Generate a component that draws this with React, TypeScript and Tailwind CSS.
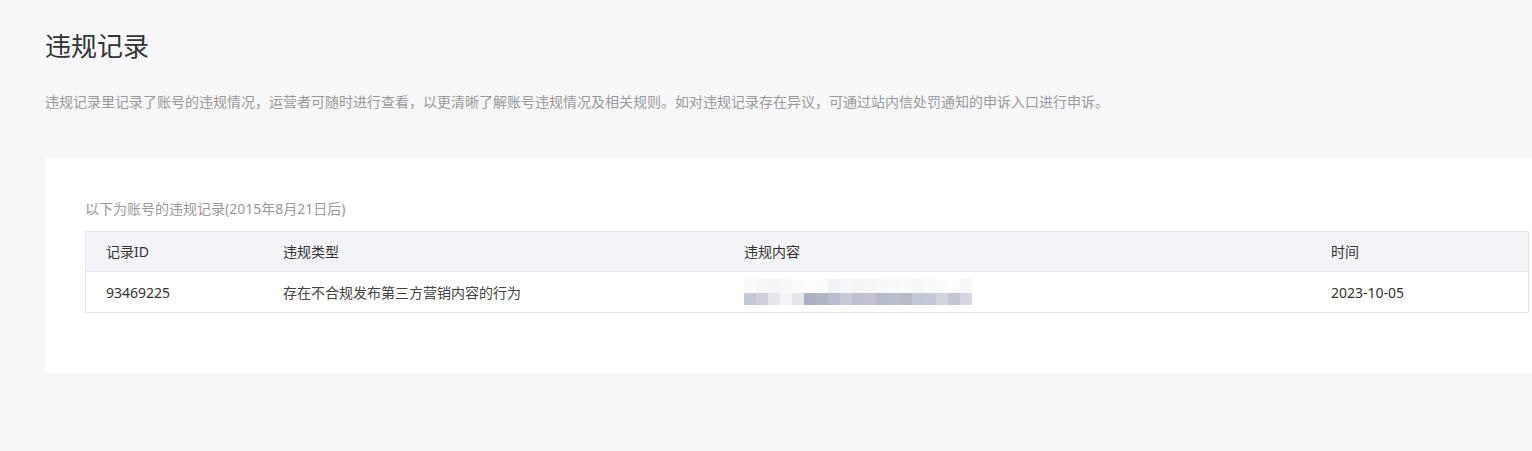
const blurTop = [
  "#fafafb", "#f7f7f9", "#f4f5f7", "#f8f8fa", "#fbfbfc", "#fdfdfd", "#fbfbfc", "#f2f3f6", "#f6f7f8", "#f4f5f7",
  "#f5f6f8", "#f8f8fa", "#f9f9fa", "#fafafb", "#f7f7f9", "#fafafb", "#fcfcfd", "#fdfdfd", "#f6f6f8",
];

const blurBottom = [
  "#c5c8d5", "#cdd0db", "#e6e7ed", "#f3f4f7", "#e5e5ea", "#aab0c4", "#b0b5c8", "#b9bdcf", "#c8cad7", "#bcc0cf",
  "#c2c3cf", "#b7bccd", "#b9bdcd", "#b9bac7", "#c3c8d7", "#c5c9d7", "#d2d4de", "#c4c7d3", "#d5d8e2",
];

function Blurred() {
  return (
    <div className="flex flex-col">
      <div className="flex h-[14px]">
        {blurTop.map((c, i) => (
          <div key={i} className="w-[12px] h-full" style={{ backgroundColor: c }} />
        ))}
      </div>
      <div className="flex h-[12px]">
        {blurBottom.map((c, i) => (
          <div key={i} className="w-[12px] h-full" style={{ backgroundColor: c }} />
        ))}
      </div>
    </div>
  );
}

export default function App() {
  const font = { fontFamily: '"Noto Sans", "Noto Sans CJK SC", sans-serif' };

  return (
    <div className="w-[1532px] h-[451px] overflow-hidden bg-[#f6f7f9]" style={font}>
      <div className="pl-[45px] pt-[28px]">
        <h1 className="text-[26px] leading-[36px] text-[#333]">违规记录</h1>
        <p className="mt-[28px] text-[14px] leading-[20px] text-[#9a9a9a]">
          违规记录里记录了账号的违规情况，运营者可随时进行查看，以更清晰了解账号违规情况及相关规则。如对违规记录存在异议，可通过站内信处罚通知的申诉入口进行申诉。
        </p>

        <div className="mt-[46px] w-[1524px] bg-white pl-[40px] pr-[40px] pt-[40px] pb-[60px]">
          <div className="text-[14px] leading-[22px] text-[#9a9a9a] mb-[11px]">
            以下为账号的违规记录(2015年8月21日后)
          </div>

          <div className="border border-[#e4e6eb] text-[14px] text-[#333]">
            <div className="flex h-[40px] items-center bg-[#f3f4f7] border-b border-[#e4e6eb]">
              <div className="w-[177px] pl-[20px]">记录ID</div>
              <div className="w-[461px] pl-[20px]">违规类型</div>
              <div className="w-[587px] pl-[20px]">违规内容</div>
              <div className="flex-1 pl-[20px]">时间</div>
            </div>
            <div className="flex h-[40px] items-center">
              <div className="w-[177px] pl-[20px]">93469225</div>
              <div className="w-[461px] pl-[20px] text-[#444]">存在不合规发布第三方营销内容的行为</div>
              <div className="w-[587px] pl-[20px]">
                <Blurred />
              </div>
              <div className="flex-1 pl-[20px]">2023-10-05</div>
            </div>
          </div>
        </div>
      </div>
    </div>
  );
}
